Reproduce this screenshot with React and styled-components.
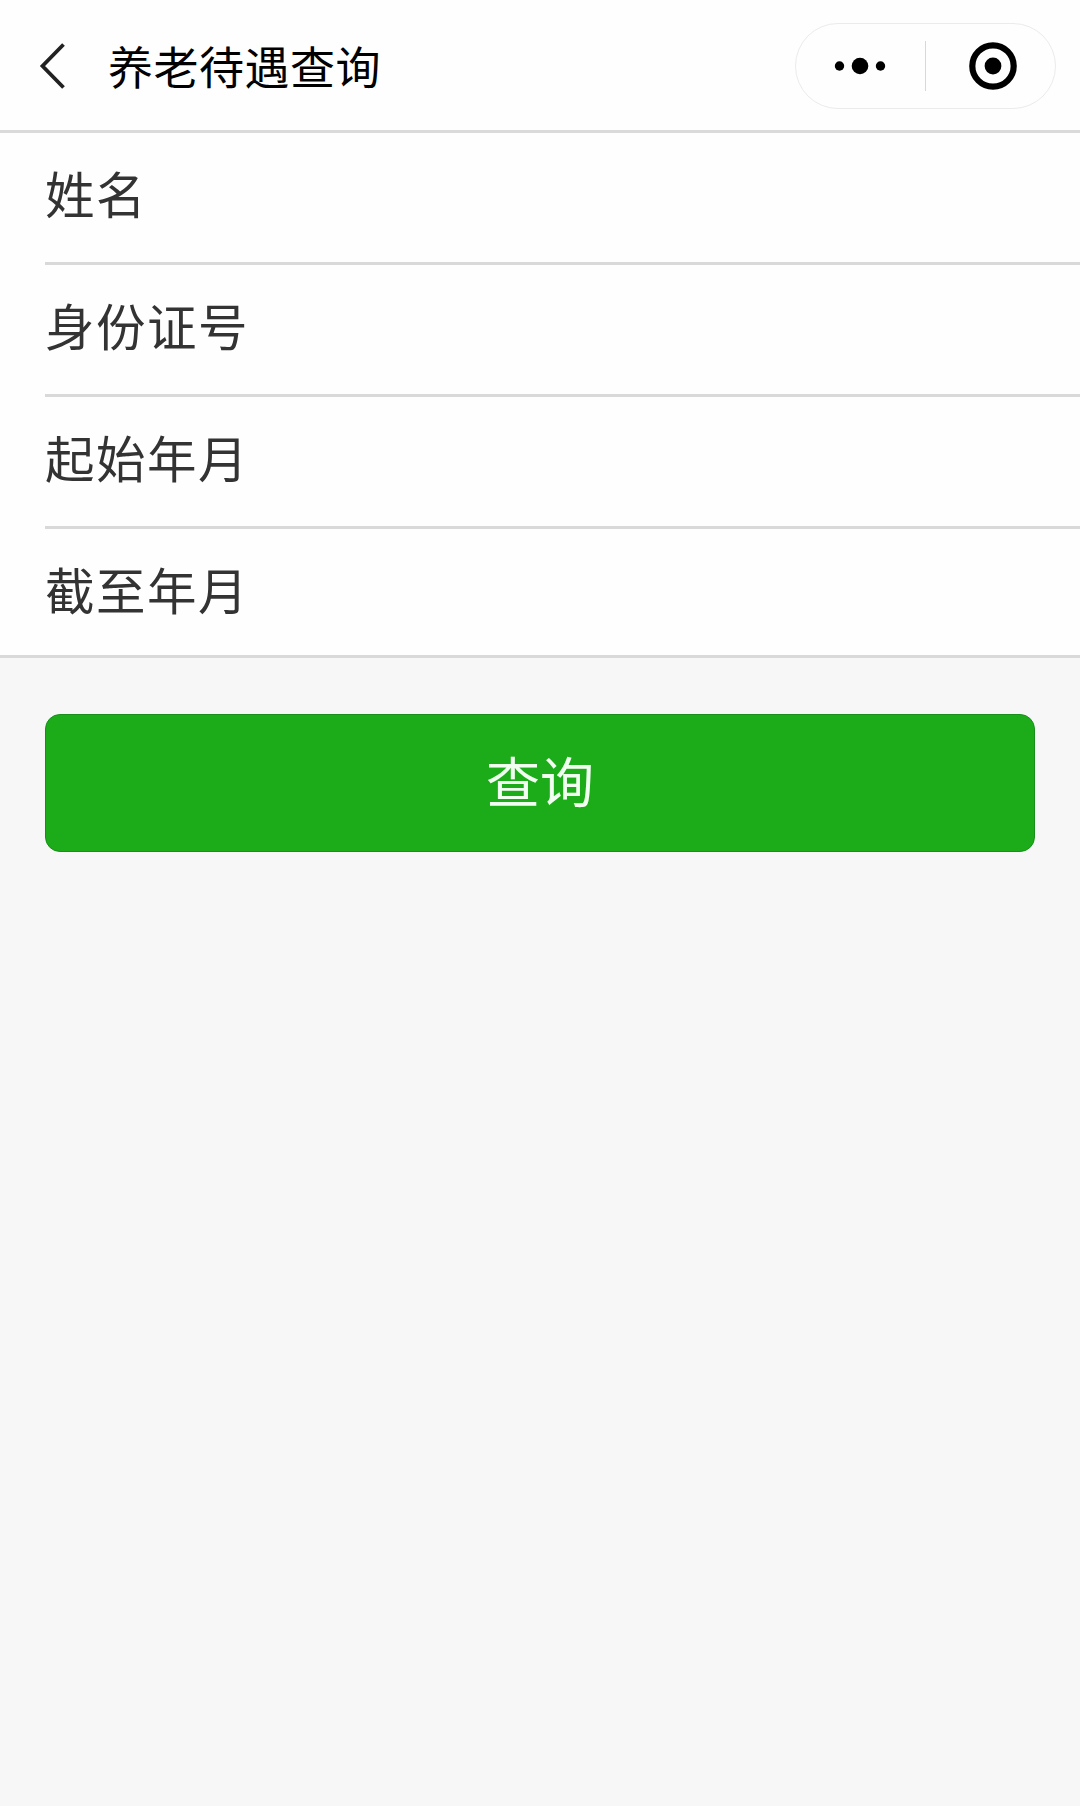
import React, { useState } from 'react';
import styled, { createGlobalStyle } from 'styled-components';

const GlobalStyle = createGlobalStyle`
  * {
    box-sizing: border-box;
  }

  body {
    margin: 0;
    background-color: #f7f7f7;
    font-family: 'Noto Sans CJK SC', sans-serif;
  }
`;

const Page = styled.div`
  min-height: 1806px;
  background-color: #f7f7f7;
`;

const Header = styled.header`
  display: flex;
  align-items: center;
  height: 133px;
  padding: 2px 24px 0 36px;
  border-bottom: 3px solid #dadada;
  background-color: #fefefe;
`;

const BackButton = styled.button`
  display: flex;
  width: 36px;
  height: 48px;
  padding: 0;
  border: none;
  background: none;
  cursor: pointer;
`;

const Title = styled.h1`
  flex: 1;
  margin: 0 0 0 36px;
  font-size: 45px;
  font-weight: 400;
  letter-spacing: 0.5px;
  line-height: 66px;
  color: #000;
`;

const Capsule = styled.div`
  display: flex;
  align-items: center;
  width: 261px;
  height: 86px;
  border: 1.5px solid #ebebeb;
  border-radius: 43px;
`;

const CapsuleButton = styled.button`
  display: flex;
  align-items: center;
  justify-content: center;
  width: 129px;
  height: 100%;
  padding: 0 ${(props) => props.$insetRight || 0}px 0 ${(props) => props.$insetLeft || 0}px;
  border: none;
  background: none;
  cursor: pointer;
`;

const CapsuleDivider = styled.span`
  width: 1px;
  height: 50px;
  background-color: #d8d8d8;
`;

const Form = styled.form`
  margin: 0;
`;

const FieldList = styled.div`
  padding-left: 45px;
  border-bottom: 3px solid #d9d9d9;
  background-color: #fefefe;
`;

const Field = styled.label`
  display: flex;
  align-items: center;
  height: ${(props) => (props.$last ? 126 : 132)}px;
  border-bottom: ${(props) => (props.$last ? 'none' : '3px solid #d9d9d9')};
`;

const FieldName = styled.span`
  width: 315px;
  padding-bottom: ${(props) => (props.$last ? 7 : 9)}px;
  font-size: 49.5px;
  letter-spacing: 1.5px;
  line-height: 72px;
  color: #333;
`;

const FieldInput = styled.input`
  flex: 1;
  height: 72px;
  padding: 0;
  border: none;
  outline: none;
  background: none;
  font-family: inherit;
  font-size: 49.5px;
  color: #333;
`;

const Actions = styled.div`
  padding: 56px 45px 0;
`;

const SubmitButton = styled.button`
  display: block;
  width: 100%;
  height: 138px;
  padding: 0 0 7px;
  border: 1px solid #198f1b;
  border-radius: 15px;
  background-color: #1cac1a;
  font-family: inherit;
  font-size: 54px;
  line-height: 1;
  color: #f1fff0;
  cursor: pointer;
`;

const fields = [
  { name: 'name', label: '姓名' },
  { name: 'idNumber', label: '身份证号' },
  { name: 'startMonth', label: '起始年月' },
  { name: 'endMonth', label: '截至年月' },
];

const App = () => {
  const [values, setValues] = useState({});

  const handleChange = (e) => {
    setValues({ ...values, [e.target.name]: e.target.value });
  };

  const handleSubmit = (e) => {
    e.preventDefault();
  };

  return (
    <Page>
      <GlobalStyle />
      <Header>
        <BackButton type="button">
          <svg width="36" height="48" viewBox="0 0 36 48" fill="none">
            <path d="M27.5 2.5 L6.5 24 L27.5 45.5" stroke="#222" strokeWidth="3.8" />
          </svg>
        </BackButton>
        <Title>养老待遇查询</Title>
        <Capsule>
          <CapsuleButton type="button" $insetRight={2}>
            <svg width="52" height="20" viewBox="0 0 52 20">
              <circle cx="5.5" cy="10" r="4.7" />
              <circle cx="26" cy="10" r="8.3" />
              <circle cx="46.5" cy="10" r="4.7" />
            </svg>
          </CapsuleButton>
          <CapsuleDivider />
          <CapsuleButton type="button" $insetLeft={4}>
            <svg width="50" height="50" viewBox="0 0 50 50">
              <circle cx="25" cy="25" r="20.7" fill="none" stroke="#000" strokeWidth="6.2" />
              <circle cx="25" cy="25" r="8.4" />
            </svg>
          </CapsuleButton>
        </Capsule>
      </Header>

      <Form onSubmit={handleSubmit}>
        <FieldList>
          {fields.map((field, index) => {
            const last = index === fields.length - 1;
            return (
              <Field key={field.name} $last={last}>
                <FieldName $last={last}>{field.label}</FieldName>
                <FieldInput
                  name={field.name}
                  value={values[field.name] || ''}
                  onChange={handleChange}
                />
              </Field>
            );
          })}
        </FieldList>
        <Actions>
          <SubmitButton type="submit">查询</SubmitButton>
        </Actions>
      </Form>
    </Page>
  );
};

export default App;
